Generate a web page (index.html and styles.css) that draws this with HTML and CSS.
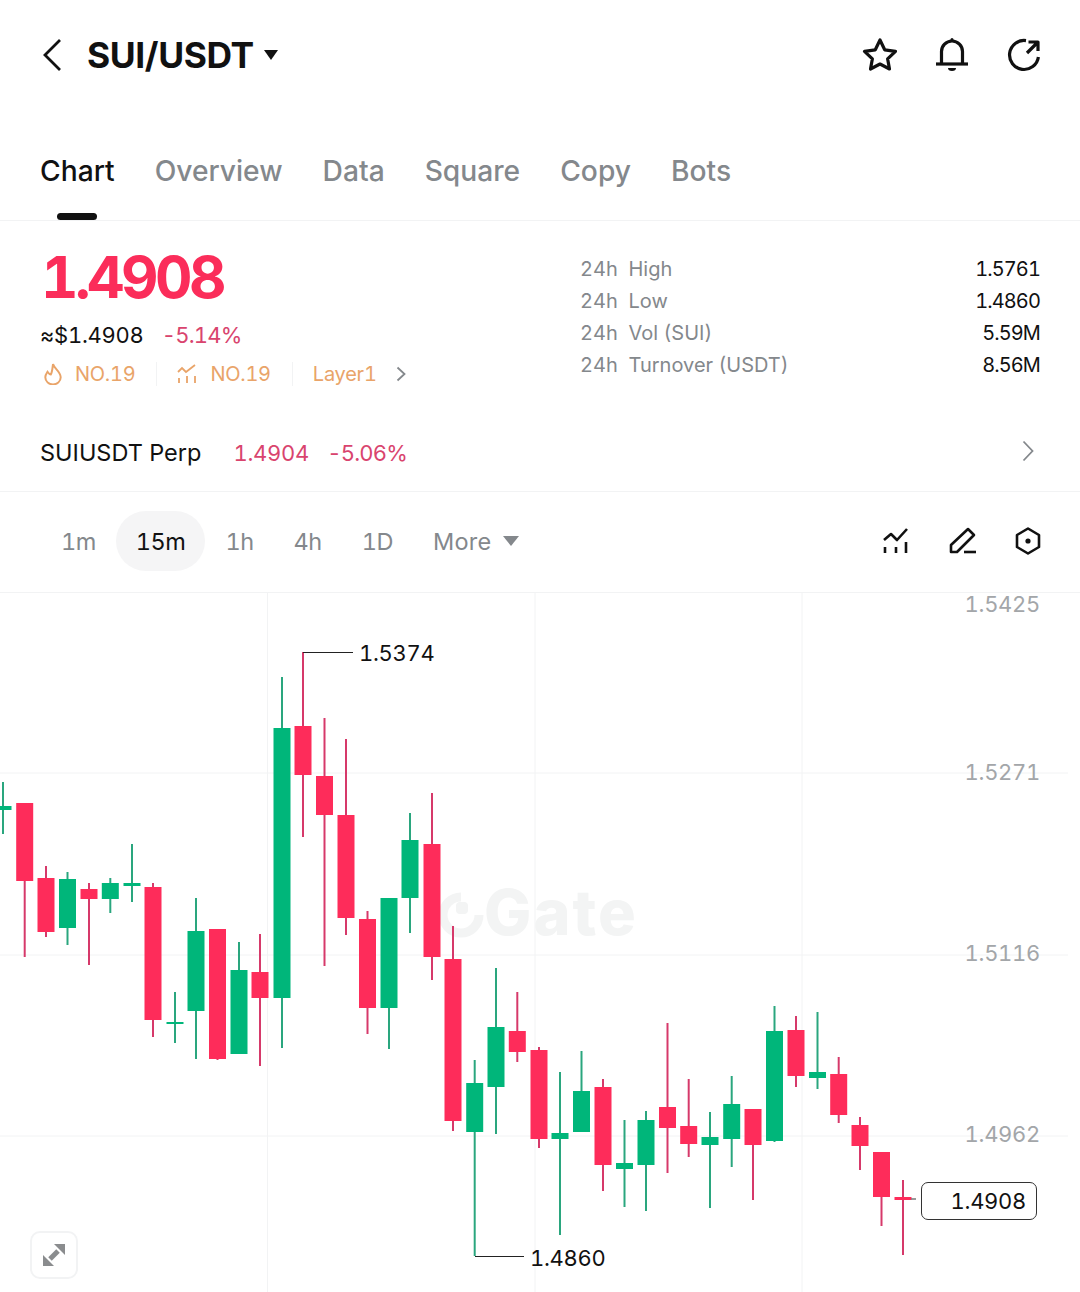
FILE: index.html
```html
<html>
  <head>
    <link rel="stylesheet" href="styles.css">
  </head>
  <body>
    <div class="page">
      <div class="topbar">
        <div class="pair">
          <svg class="back" viewBox="0 0 20 34" width="20" height="34"><path d="M18 2 L3 17 L18 32"/></svg>
          <span class="pair-name">SUI/USDT</span>
          <span class="caret"></span>
        </div>
        <div class="top-icons">
          <svg class="icon" viewBox="0 0 36 36" width="36" height="36"><path d="M18 3 L22.7 12.8 L33.500 14.300 L25.600 21.800 L27.500 32 L18 27 L8.500 32 L10.400 21.800 L2.500 14.300 L13.300 12.800 Z"/></svg>
          <svg class="icon" viewBox="0 0 36 36" width="36" height="36"><path d="M7.5 27 V14.5 a10.5 10.5 0 0 1 21 0 V27"/><path d="M2 27 H34"/><circle class="solid" cx="18" cy="2.5" r="1.5"/><path class="solid" d="M14 31 h8 a4 3 0 0 1 -8 0 Z"/></svg>
          <svg class="icon" viewBox="0 0 36 36" width="36" height="36"><path d="M20 3.6 A14.5 14.5 0 1 0 32.4 20"/><path d="M21 16 L31.5 5.5 M22.5 5 H32 V14"/></svg>
        </div>
      </div>

      <div class="tabs">
        <div class="tab active">Chart</div>
        <div class="tab">Overview</div>
        <div class="tab">Data</div>
        <div class="tab">Square</div>
        <div class="tab">Copy</div>
        <div class="tab">Bots</div>
      </div>

      <div class="summary">
        <div class="summary-left">
          <div class="last-price">1.4908</div>
          <div class="sub-price"><span>≈$1.4908</span><span class="down pct">-5.14%</span></div>
          <div class="tags">
            <div class="tag">
              <svg class="tag-icon flame" viewBox="2 1 16 20" width="18" height="22"><path d="M10 2 C11 6 17 9 17 14 A7 6.500 0 0 1 3 14 C3 12 4 10.500 5 9 C6 10.500 7 11.500 8 11.500 C9.500 9 9.500 5 10 2 Z"/></svg>
              <span>NO.19</span>
            </div>
            <div class="tag">
              <svg class="tag-icon" viewBox="0 0 20 20" width="20" height="20"><path d="M1 8 L5 4 L9 8 L18 1"/><path d="M2 14 V19 M10 12 V19 M18 12 V19"/></svg>
              <span>NO.19</span>
            </div>
            <div class="tag">
              <span>Layer1</span>
              <svg class="chev" viewBox="0 0 10 16" width="10" height="16"><path d="M1.5 1.5 L8.500 8 L1.500 14.500"/></svg>
            </div>
          </div>
        </div>
        <div class="stats">
          <div class="stat"><span>24h&nbsp;&nbsp;High</span><b>1.5761</b></div>
          <div class="stat"><span>24h&nbsp;&nbsp;Low</span><b>1.4860</b></div>
          <div class="stat"><span>24h&nbsp;&nbsp;Vol (SUI)</span><b>5.59M</b></div>
          <div class="stat"><span>24h&nbsp;&nbsp;Turnover (USDT)</span><b>8.56M</b></div>
        </div>
      </div>

      <div class="perp">
        <span class="perp-name">SUIUSDT Perp</span>
        <span class="down perp-num">1.4904</span>
        <span class="down perp-num pct">-5.06%</span>
        <svg class="chev perp-chev" viewBox="0 0 12 22" width="12" height="22"><path d="M1.5 1.5 L10.500 11 L1.500 20.500"/></svg>
      </div>

      <div class="toolbar">
        <div class="intervals">
          <div class="interval">1m</div>
          <div class="interval selected">15m</div>
          <div class="interval">1h</div>
          <div class="interval">4h</div>
          <div class="interval">1D</div>
          <div class="interval more">More <span class="more-caret"></span></div>
        </div>
        <div class="tools">
          <svg class="tool" viewBox="0 0 26 28" width="26" height="28"><path d="M1 13 L8 7 L14 13 L24 2"/><path d="M2 20 V26 M13 20 V26 M23 15 V26"/></svg>
          <svg class="tool tool-draw" viewBox="0 0 28 28" width="28" height="28"><path d="M2 25 V18 L19 2 L25 8 L8 25 Z"/><path d="M15 25 H27"/></svg>
          <svg class="tool" viewBox="0 0 28 28" width="28" height="28"><path d="M14 1.5 L25 8 V20 L14 26.500 L3 20 V8 Z"/><circle class="solid" cx="14" cy="14" r="2.600"/></svg>
        </div>
      </div>

      <div class="chart">
        <svg id="candles" class="chart-svg" width="1080" height="699" viewBox="0 593 1080 699">
          <g class="grid">
            <path d="M0 773 H1068 M0 955 H1068 M0 1136 H1068"/>
            <path d="M267.5 593 V1292 M535 593 V1292 M802 593 V1292"/>
          </g>
          <g class="watermark">
            <path d="M461 897 A18 18 0 1 0 479 915"/>
            <rect x="456" y="902" width="12" height="12" rx="4"/>
            <text x="484" y="935">Gate</text>
          </g>
          <g id="candle-layer"></g>
          <g class="axis">
            <text x="1040" y="612">1.5425</text>
            <text x="1040" y="780">1.5271</text>
            <text x="1040" y="961">1.5116</text>
            <text x="1040" y="1142">1.4962</text>
          </g>
          <g class="marks">
            <path d="M303 652.5 H353 M475 1256.5 H524"/>
            <text x="359" y="661">1.5374</text>
            <text x="530" y="1266">1.4860</text>
          </g>
          <path class="last-tick" d="M911 1199 H916"/>
        </svg>
        <div class="last-box">1.4908</div>
        <div class="expand">
          <svg viewBox="0 0 22 22" width="22" height="22"><path class="head" d="M11 0 H22 V11 Z"/><path class="head" d="M0 11 V22 H11 Z"/><path class="shaft" d="M15 7 L7 15"/></svg>
        </div>
      </div>
    </div>
    <script src="chart.js"></script>
  </body>
</html>
```

FILE: styles.css
```css
* {
  box-sizing: border-box;
}
body {
  margin: 0;
  background: #fff;
  color: #111;
  font-family: Inter, "Noto Sans", sans-serif;
  font-variant-numeric: tabular-nums;
}
.page {
  width: 1080px;
  height: 1292px;
  overflow: hidden;
}
.topbar {
  height: 108px;
  padding: 2px 38px 0 42px;
  display: flex;
  align-items: center;
  justify-content: space-between;
}
.pair {
  display: flex;
  align-items: center;
}
.back path {
  fill: none;
  stroke: #111;
  stroke-width: 2.8;
}
.pair-name {
  margin-left: 25px;
  font-size: 35.4px;
  font-weight: 700;
  letter-spacing: -0.4px;
}
.caret {
  margin-left: 10px;
  border-left: 7px solid transparent;
  border-right: 7px solid transparent;
  border-top: 10px solid #111;
}
.top-icons {
  display: flex;
  gap: 36px;
}
.icon path {
  fill: none;
  stroke: #111;
  stroke-width: 3.2;
  stroke-linejoin: round;
}
.icon .solid {
  fill: #111;
  stroke: none;
}
.tabs {
  height: 113px;
  padding: 0 40px;
  display: flex;
  gap: 40px;
  border-bottom: 1px solid #f2f3f4;
}
.tab {
  position: relative;
  padding-top: 46px;
  font-size: 28.2px;
  font-weight: 500;
  color: #84888c;
}
.tab.active {
  color: #111;
}
.tab.active::after {
  content: "";
  position: absolute;
  left: 17px;
  bottom: 0;
  width: 40px;
  height: 7px;
  border-radius: 4px;
  background: #111;
}
.summary {
  height: 199px;
  padding: 0 40px;
  display: flex;
  justify-content: space-between;
}
.summary-left {
  width: 500px;
}
.last-price {
  margin: 21px 0 0 1px;
  font-size: 58px;
  line-height: 70px;
  font-weight: 700;
  color: #fb2d5a;
  letter-spacing: -3.5px;
}
.sub-price {
  margin-top: 8px;
  font-size: 22px;
  line-height: 30px;
  letter-spacing: -0.25px;
  display: flex;
  gap: 20px;
}
.down {
  color: #d9446e;
}
.pct {
  margin-left: -2px;
  letter-spacing: -0.75px;
}
.tags {
  margin-top: 12px;
  height: 24px;
  display: flex;
  align-items: center;
  font-size: 20px;
  letter-spacing: -0.25px;
  color: #e9a469;
}
.tag {
  display: flex;
  align-items: center;
  gap: 13px;
  height: 24px;
  padding-right: 21px;
  margin-right: 20px;
  border-right: 1px solid #f2f3f4;
}
.tag:last-child {
  border-right: none;
  gap: 19px;
}
.flame {
  margin-left: 4px;
}
.tag-icon path {
  fill: none;
  stroke: #e9a469;
  stroke-width: 1.8;
}
.chev path {
  fill: none;
  stroke: #84888c;
  stroke-width: 1.8;
}
.stats {
  width: 460px;
  padding-top: 32px;
  font-size: 20px;
}
.stat {
  height: 32px;
  display: flex;
  align-items: center;
  justify-content: space-between;
  color: #84888c;
}
.stat b {
  font-weight: 400;
  color: #111;
  letter-spacing: -0.9px;
}
.perp {
  height: 72px;
  padding: 0 40px 6px;
  display: flex;
  align-items: center;
  font-size: 23.5px;
  border-bottom: 1px solid #f2f3f4;
  gap: 20px;
}
.perp-name {
  margin-right: 12px;
}
.perp-num {
  font-size: 22px;
  letter-spacing: -0.25px;
}
.perp-num.pct {
  letter-spacing: -0.75px;
}
.perp-chev {
  margin: -3px 6px 0 auto;
}
.toolbar {
  height: 101px;
  padding: 0 38px 2px 41px;
  display: flex;
  align-items: center;
  justify-content: space-between;
  border-bottom: 1px solid #f2f3f4;
}
.intervals {
  display: flex;
  align-items: center;
  font-size: 23.5px;
  color: #84888c;
}
.interval {
  height: 60px;
  padding: 0 20px;
  border-radius: 30px;
  display: flex;
  align-items: center;
  letter-spacing: -0.5px;
}
.interval.selected {
  background: #f5f5f6;
  color: #111;
}
.more {
  gap: 4px;
  letter-spacing: 0.3px;
}
.more-caret {
  margin-left: 7px;
  border-left: 8px solid transparent;
  border-right: 8px solid transparent;
  border-top: 10px solid #84888c;
}
.tools {
  display: flex;
  align-items: center;
  gap: 38px;
}
.tool-draw {
  margin: 0 -1px 0 2px;
}
.tool path {
  fill: none;
  stroke: #111;
  stroke-width: 2.6;
  stroke-linejoin: round;
}
.tool .solid {
  fill: #111;
  stroke: none;
}
.chart {
  position: relative;
  height: 699px;
}
.chart-svg {
  display: block;
  overflow: visible;
}
.grid path {
  fill: none;
  stroke: #f2f3f4;
  stroke-width: 1;
}
.watermark text {
  font-size: 63px;
  font-weight: 800;
  letter-spacing: 2px;
  fill: #f3f4f4;
}
.watermark rect {
  fill: #f3f4f4;
}
.watermark path {
  fill: none;
  stroke: #f3f4f4;
  stroke-width: 9;
}
.axis text {
  font-size: 22px;
  letter-spacing: -0.3px;
  fill: #a3a6a9;
  text-anchor: end;
}
.marks path {
  fill: none;
  stroke: #222;
  stroke-width: 1;
}
.marks text {
  font-size: 22px;
  letter-spacing: -0.3px;
  fill: #111;
}
.last-tick {
  stroke: #777;
  stroke-width: 1.5;
}
.wick-up {
  stroke: #2aa67e;
  stroke-width: 2;
}
.wick-down {
  stroke: #d6396a;
  stroke-width: 2;
}
.body-up {
  fill: #00b67a;
}
.body-down {
  fill: #fe2c5a;
}
.last-box {
  position: absolute;
  left: 921px;
  top: 589px;
  width: 116px;
  height: 38px;
  padding-right: 10px;
  border: 1px solid #333;
  border-radius: 7px;
  background: #fff;
  font-size: 22px;
  letter-spacing: -0.3px;
  line-height: 36px;
  text-align: right;
}
.expand {
  position: absolute;
  left: 30px;
  top: 638px;
  width: 48px;
  height: 48px;
  border: 2px solid #f2f3f4;
  border-radius: 10px;
  background: #fff;
  display: flex;
  align-items: center;
  justify-content: center;
}
.expand .head {
  fill: #8a8c8e;
}
.expand .shaft {
  stroke: #8a8c8e;
  stroke-width: 5;
}
```

FILE: chart.js
```js
// x, body top, body bottom, high, low (screen y), up = green
const candles = [
  [3, 806, 810, 782, 834, 1],
  [24.7, 803, 881, 803, 957, 0],
  [46, 878, 932, 866, 937, 0],
  [67.5, 879, 928, 872, 945, 1],
  [89, 889, 899, 883, 965, 0],
  [110.3, 883, 899, 878, 913, 1],
  [132, 883, 886, 844, 902, 1],
  [153, 887, 1020, 883, 1037, 0],
  [175, 1022, 1024, 992, 1043, 1],
  [196, 931, 1011, 898, 1059, 1],
  [217.5, 929, 1059, 929, 1060, 0],
  [239, 970, 1054, 942, 1054, 1],
  [260, 972, 998, 934, 1066, 0],
  [282, 728, 998, 677, 1048, 1],
  [303, 726, 775, 652, 837, 0],
  [324.5, 776, 815, 718, 966, 0],
  [346, 815, 918, 739, 935, 0],
  [367.5, 919, 1008, 911, 1034, 0],
  [389, 898, 1008, 898, 1049, 1],
  [410, 840, 898, 813, 933, 1],
  [432, 844, 957, 793, 980, 0],
  [453, 959, 1121, 926, 1131, 0],
  [474.7, 1083, 1132, 1060, 1256, 1],
  [496, 1027, 1087, 968, 1134, 1],
  [517.3, 1031, 1052, 992, 1062, 0],
  [539, 1050, 1139, 1047, 1148, 0],
  [560, 1133, 1139, 1072, 1235, 1],
  [581.5, 1091, 1132, 1051, 1132, 1],
  [603, 1087, 1165, 1079, 1191, 0],
  [624.5, 1163, 1169, 1120, 1207, 1],
  [646, 1120, 1165, 1111, 1211, 1],
  [667.5, 1107, 1128, 1023, 1173, 0],
  [688.7, 1126, 1144, 1079, 1157, 0],
  [710, 1137, 1145, 1112, 1208, 1],
  [731.7, 1104, 1139, 1076, 1167, 1],
  [753, 1109, 1145, 1109, 1200, 0],
  [774.5, 1031, 1141, 1006, 1142, 1],
  [796, 1030, 1076, 1016, 1087, 0],
  [817.5, 1072, 1078, 1012, 1089, 1],
  [838.7, 1074, 1115, 1057, 1123, 0],
  [860, 1125, 1146, 1117, 1170, 0],
  [881.5, 1152, 1197, 1152, 1226, 0],
  [903, 1197, 1200, 1180, 1255, 0]
];

const layer = document.getElementById("candle-layer");
const ns = "http://www.w3.org/2000/svg";

candles.forEach(([x, top, bottom, high, low, up]) => {
  const wick = document.createElementNS(ns, "line");
  wick.setAttribute("x1", x);
  wick.setAttribute("x2", x);
  wick.setAttribute("y1", high);
  wick.setAttribute("y2", low);
  wick.setAttribute("class", up ? "wick-up" : "wick-down");
  layer.appendChild(wick);

  const body = document.createElementNS(ns, "rect");
  body.setAttribute("x", x - 8.5);
  body.setAttribute("y", top);
  body.setAttribute("width", 17);
  body.setAttribute("height", bottom - top);
  body.setAttribute("class", up ? "body-up" : "body-down");
  layer.appendChild(body);
});
```
